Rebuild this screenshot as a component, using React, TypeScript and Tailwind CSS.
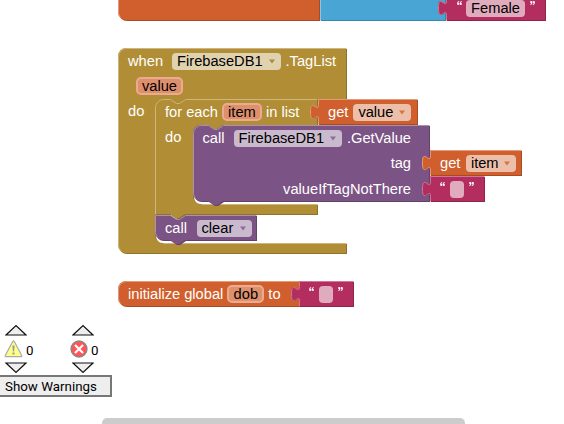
import type { ReactNode } from 'react';

const NOTCH = 'H15 l6,4 3,0 6,-4';
const TAB = 'V20 c0,-10 -8,8 -8,-7.5 s8,2.5 8,-7.5';

const C = {
  olive: ['#b18e35', '#8e722a', '#cdb77f'],
  purple: ['#7c5385', '#63426a', '#ab90b1'],
  orange: ['#d05f2d', '#a64c24', '#e29a7b'],
  pink: ['#b32d5e', '#8f244b', '#ce7896'],
  blue: ['#49a6d4', '#3a85aa', '#8bc5e3'],
};
type Colour = keyof typeof C;

function Shape({ colour, d, light }: { colour: Colour; d: string; light: string }) {
  const [fill, dark, hi] = C[colour];
  return (
    <svg className="absolute left-0 top-0 overflow-visible" width="1" height="1">
      <path d={d} fill={dark} transform="translate(1,1)" />
      <path d={d} fill={fill} />
      <path d={light} fill="none" stroke={hi} strokeWidth="1" transform="translate(.5,.5)" />
    </svg>
  );
}

function Block({ at, shape, children }: { at: string; shape: ReactNode; children?: ReactNode }) {
  return (
    <div className={`absolute ${at}`}>
      {shape}
      <div className="relative">{children}</div>
    </div>
  );
}

function Row({ className = '', children }: { className?: string; children: ReactNode }) {
  return <div className={`flex h-[26px] items-center leading-[26px] ${className}`}>{children}</div>;
}

function Dropdown({ className, arrow, children }: { className: string; arrow: string; children: ReactNode }) {
  return (
    <span className={`flex h-[17px] items-center justify-between rounded-[4px] bg-white/60 pl-[5px] pr-[6px] leading-[17px] text-black ${className}`}>
      {children}
      <svg width="6" height="5" viewBox="0 0 6 5"><path d="M0 .5H6L3 4.5Z" fill={arrow} /></svg>
    </span>
  );
}

function Param({ className, children }: { className: string; children: ReactNode }) {
  return (
    <span className={`flex h-[18px] items-center justify-center rounded-[5px] border-2 border-[#eaab90] bg-[#de8f6c] leading-[14px] text-black ${className}`}>
      {children}
    </span>
  );
}

function Quote({ close = false }: { close?: boolean }) {
  return (
    <svg className={`mb-[10px] h-[4px] w-[5px] ${close ? 'rotate-180' : ''}`} viewBox="0 0 5 4">
      <path d="M1.7 0Q.2 1 .2 2.6Q.2 4 1.2 4Q2.2 4 2.2 3Q2.2 2.1 1.2 2.1Q1.2 1 2.1 .4ZM4.3 0Q2.8 1 2.8 2.6Q2.8 4 3.8 4Q4.8 4 4.8 3Q4.8 2.1 3.8 2.1Q3.8 1 4.7 .4Z" fill="#fff" stroke="#fff" strokeWidth=".3" />
    </svg>
  );
}

function valueShape(colour: Colour, w: number) {
  return <Shape colour={colour} d={`M0,0 H${w} V25 H0 ${TAB} Z`} light={`M0,25 ${TAB} V0 H${w}`} />;
}

function EmptyText() {
  return (
    <Row className="pl-[10px]">
      <Quote />
      <span className="ml-[5px] mr-[5px] h-[17px] w-[14px] rounded-[4px] bg-white/60" />
      <Quote close />
    </Row>
  );
}

function Triangle({ down = false }: { down?: boolean }) {
  return (
    <svg width="22" height="12" viewBox="0 0 22 12" className="block">
      <path d={down ? 'M1 1H21L11 10.5Z' : 'M1 11H21L11 1.5Z'} fill="#eee" stroke="#111" strokeWidth="1.2" />
    </svg>
  );
}

function Counter({ icon }: { icon: ReactNode }) {
  return (
    <div className="flex w-[67px] flex-col">
      <div className="pl-[5px]"><Triangle /></div>
      <div className="flex h-[26px] items-center gap-[3px] pl-[3px]">{icon}<span className="pt-[3px]">0</span></div>
      <div className="pl-[5px]"><Triangle down /></div>
    </div>
  );
}

export default function App() {
  return (
    <div className="relative h-[424px] w-[564px] overflow-hidden whitespace-nowrap bg-white font-['Liberation_Sans',Arial,sans-serif] text-[14.667px] text-white">
      <Block at="left-[118px] top-[-6px]" shape={<Shape colour="orange" d="M0,0 H201 V26 H8 A8,8 0 0,1 0,18 Z" light="M2,23 A8,8 0 0,1 0,18 V0" />} />
      <Block at="left-[320px] top-[-6px]" shape={<Shape colour="blue" d="M0,0 H125 V26 H0 Z" light="M0,26 V0" />} />
      <Block at="left-[446px] top-[-5px]" shape={valueShape('pink', 99)}>
        <Row className="pl-[11px]">
          <Quote />
          <span className="ml-[4px] mr-[5px] flex h-[17px] w-[59px] items-center justify-center rounded-[4px] bg-white/60 text-black">Female</span>
          <Quote close />
        </Row>
      </Block>

      <Block
        at="left-[118px] top-[48px]"
        shape={
          <Shape
            colour="olive"
            d="M0,8 A8,8 0 0,1 8,0 H228 V51 H67 l-6,4 -3,0 -6,-4 h-7 a8,8 0 0,0 -8,8 V187 a8,8 0 0,0 8,8 H228 V205 H8 A8,8 0 0,1 0,197 Z"
            light="M2,202 A8,8 0 0,1 0,197 V8 A8,8 0 0,1 8,0 H228 M45,195 H228"
          />
        }
      >
        <Row className="pl-[10px]">
          <span>when</span>
          <Dropdown className="ml-[9px] w-[109px]" arrow="#a88a45">FirebaseDB1</Dropdown>
          <span className="ml-[4.5px]">.TagList</span>
        </Row>
        <Row className="-mt-[1px] pl-[18px]"><Param className="w-[47px]">value</Param></Row>
        <Row className="-mt-[1px] pl-[10px]"><span>do</span></Row>
      </Block>

      <Block
        at="left-[155px] top-[99px]"
        shape={
          <Shape
            colour="olive"
            d={`M0,8 A8,8 0 0,1 8,0 ${NOTCH} H162 V26 H68 l-6,4 -3,0 -6,-4 h-7 a8,8 0 0,0 -8,8 V97 a8,8 0 0,0 8,8 H162 V115 H30 l-6,4 -3,0 -6,-4 H0 Z`}
            light={`M0,115 V8 A8,8 0 0,1 8,0 ${NOTCH} H162 M46,105 H162`}
          />
        }
      >
        <Row className="pl-[10px]">
          <span>for each</span>
          <Param className="ml-[4px] w-[40px]">item</Param>
          <span className="ml-[4px]">in list</span>
        </Row>
        <Row className="-mt-[1px] pl-[10px]"><span>do</span></Row>
      </Block>

      <Block
        at="left-[193px] top-[125px]"
        shape={
          <Shape
            colour="purple"
            d={`M0,8 A8,8 0 0,1 8,0 ${NOTCH} H236 V76 H30 l-6,4 -3,0 -6,-4 H8 A8,8 0 0,1 0,68 Z`}
            light={`M2,73 A8,8 0 0,1 0,68 V8 A8,8 0 0,1 8,0 ${NOTCH} H236`}
          />
        }
      >
        <div className="w-[218px]">
          <Row className="pl-[9.5px]">
            <span>call</span>
            <Dropdown className="ml-[9px] w-[109px]" arrow="#8f6c98">FirebaseDB1</Dropdown>
            <span className="ml-[4.5px]">.GetValue</span>
          </Row>
          <Row className="-mt-[1px] justify-end"><span>tag</span></Row>
          <Row className="justify-end"><span>valueIfTagNotThere</span></Row>
        </div>
      </Block>

      <Block
        at="left-[155px] top-[215px]"
        shape={
          <Shape
            colour="purple"
            d={`M0,0 ${NOTCH} H101 V25 H30 l-6,4 -3,0 -6,-4 H8 A8,8 0 0,1 0,17 Z`}
            light={`M2,22 A8,8 0 0,1 0,17 V0 ${NOTCH} H101`}
          />
        }
      >
        <Row className="pl-[10px]">
          <span>call</span>
          <Dropdown className="ml-[9.5px] w-[55px]" arrow="#8f6c98">clear</Dropdown>
        </Row>
      </Block>

      <Block at="left-[318px] top-[99px]" shape={valueShape('orange', 99)}>
        <Row className="pl-[10px]">
          <span>get</span>
          <Dropdown className="ml-[5px] w-[58px]" arrow="#d8733f">value</Dropdown>
        </Row>
      </Block>
      <Block at="left-[430px] top-[150px]" shape={valueShape('orange', 91)}>
        <Row className="pl-[10px]">
          <span>get</span>
          <Dropdown className="ml-[5.5px] w-[50.5px]" arrow="#d8733f">item</Dropdown>
        </Row>
      </Block>
      <Block at="left-[430px] top-[176px]" shape={valueShape('pink', 54)}>
        <EmptyText />
      </Block>

      <Block
        at="left-[118px] top-[281px]"
        shape={<Shape colour="orange" d="M0,8 A8,8 0 0,1 8,0 H181 V25 H8 A8,8 0 0,1 0,17 Z" light="M2,22 A8,8 0 0,1 0,17 V8 A8,8 0 0,1 8,0 H181" />}
      >
        <Row className="pl-[10px]">
          <span>initialize global</span>
          <Param className="ml-[4px] w-[37px]">dob</Param>
          <span className="ml-[4px]">to</span>
        </Row>
      </Block>
      <Block at="left-[299px] top-[281px]" shape={valueShape('pink', 54)}>
        <EmptyText />
      </Block>

      <div className="flex h-full flex-col justify-between font-[Roboto,sans-serif] text-[13.333px] text-black">
        <div className="pt-[324px]">
          <div className="flex">
            <Counter
              icon={
                <svg width="20" height="18" viewBox="0 0 20 18">
                  <path d="M11.3 1.5L18.7 15.5Q19 16.6 18 16.6H3Q2 16.6 2.3 15.5L9.7 1.5Q10.5 .4 11.3 1.5Z" fill="#ffff87" stroke="#aaa" strokeWidth="1.2" />
                  <path d="M9.4 5.5H11.6L11.1 11.5H9.9ZM9.5 12.5H11.5V14.5H9.5Z" fill="#999" />
                </svg>
              }
            />
            <Counter
              icon={
                <svg width="18" height="18" viewBox="0 0 18 18">
                  <circle cx="9" cy="9" r="8" fill="#ff5555" stroke="#888" strokeWidth="1.3" />
                  <path d="M5 5L13 13M13 5L5 13" stroke="#fff" strokeWidth="2.2" />
                </svg>
              }
            />
          </div>
          <button className="-ml-[2px] mt-[1px] block h-[22px] w-[114px] border-2 border-[#777] bg-[#eee] pl-[5px] text-left leading-[19px]">
            Show Warnings
          </button>
        </div>
        <div className="ml-[102px] h-[6px] w-[363px] rounded-t-[5px] bg-[#ccc]" />
      </div>
    </div>
  );
}
